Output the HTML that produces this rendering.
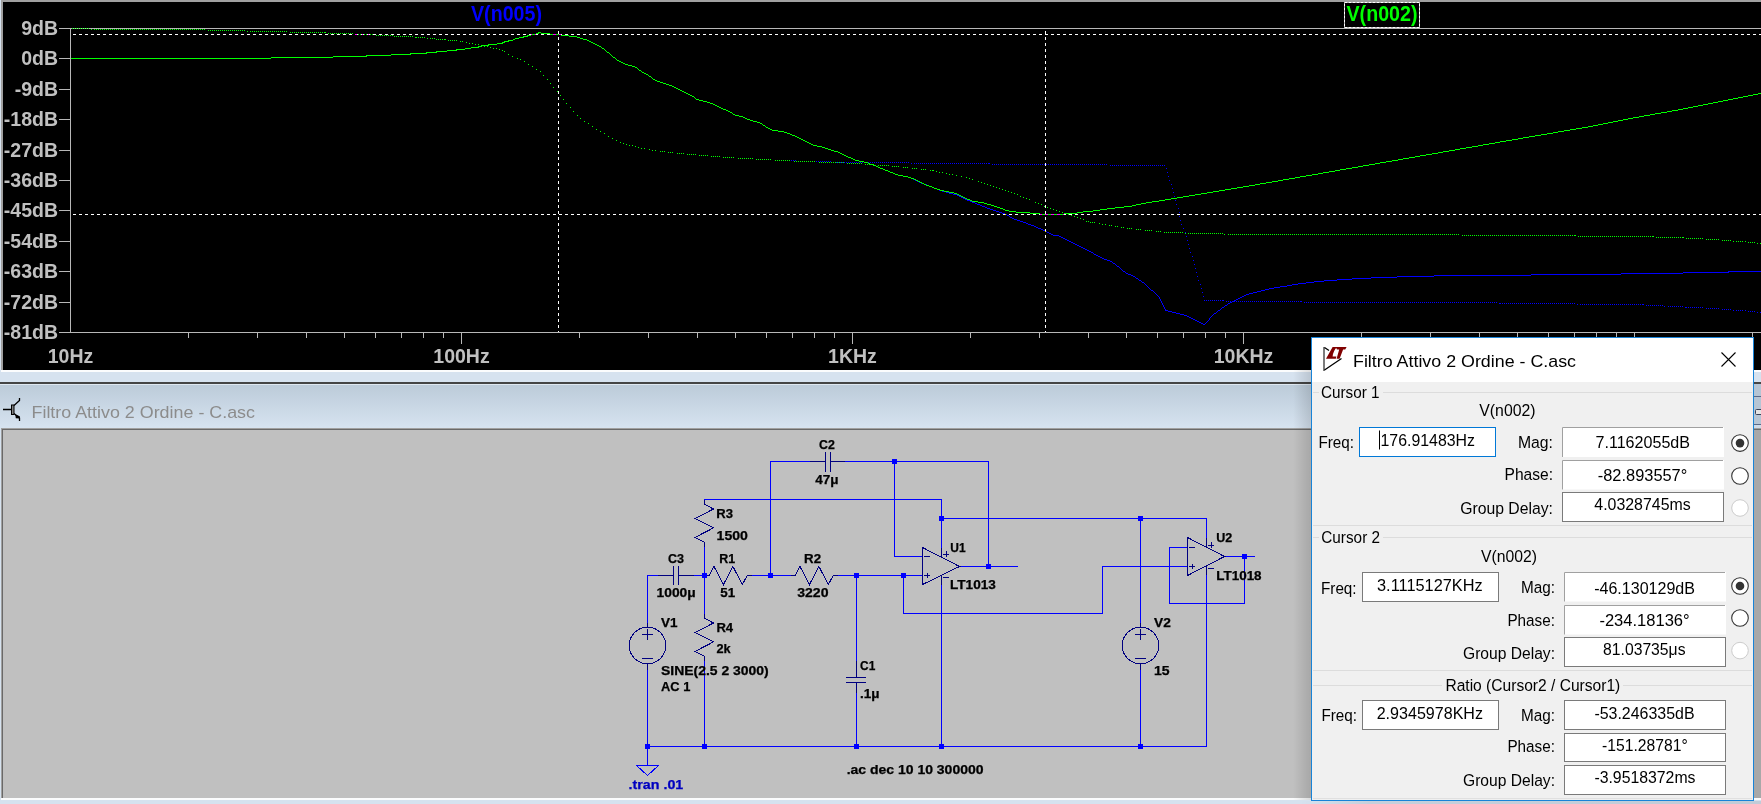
<!DOCTYPE html>
<html><head><meta charset="utf-8"><style>
html,body{margin:0;padding:0;width:1761px;height:804px;overflow:hidden;background:#d6e2ef;font-family:"Liberation Sans",sans-serif}
</style></head><body>
<svg width="1761" height="804" viewBox="0 0 1761 804" style="position:absolute;left:0;top:0"><defs><linearGradient id="tb" x1="0" y1="0" x2="0" y2="1"><stop offset="0" stop-color="#bccbd9"/><stop offset="1" stop-color="#d6e3f0"/></linearGradient></defs><rect x="0" y="0" width="1761" height="804" fill="#d6e2ef"/><rect x="1" y="0" width="1760" height="370" fill="#a0a0a0"/><rect x="3" y="2" width="1758" height="368" fill="#000"/><rect x="1" y="370" width="1760" height="2" fill="#fbfcfd"/><path d="M70.5 28 V332.5 M70 28.5 H1761 M70 332.5 H1761" stroke="#b8b8b8" stroke-width="1" fill="none"/><path d="M59 28.5 H70 M59 58.5 H70 M59 89.5 H70 M59 119.5 H70 M59 150.5 H70 M59 180.5 H70 M59 210.5 H70 M59 241.5 H70 M59 271.5 H70 M59 302.5 H70 M59 332.5 H70 M188.5 333 V338 M257.5 333 V338 M306.5 333 V338 M344.5 333 V338 M375.5 333 V338 M401.5 333 V338 M423.5 333 V338 M443.5 333 V338 M461.5 333 V344 M579.5 333 V338 M648.5 333 V338 M697.5 333 V338 M735.5 333 V338 M766.5 333 V338 M792.5 333 V338 M814.5 333 V338 M834.5 333 V338 M852.5 333 V344 M970.5 333 V338 M1039.5 333 V338 M1088.5 333 V338 M1126.5 333 V338 M1157.5 333 V338 M1183.5 333 V338 M1205.5 333 V338 M1225.5 333 V338 M1243.5 333 V344 M1361.5 333 V338 M1430.5 333 V338 M1479.5 333 V338 M1517.5 333 V338 M1548.5 333 V338 M1574.5 333 V338 M1596.5 333 V338 M1616.5 333 V338 M1634.5 333 V344 M1752.5 333 V338" stroke="#b8b8b8" stroke-width="1" fill="none"/><text x="58" y="35" text-anchor="end" font-family="Liberation Sans" font-weight="bold" font-size="19.5" fill="#c0c0c0">9dB</text><text x="58" y="65" text-anchor="end" font-family="Liberation Sans" font-weight="bold" font-size="19.5" fill="#c0c0c0">0dB</text><text x="58" y="96" text-anchor="end" font-family="Liberation Sans" font-weight="bold" font-size="19.5" fill="#c0c0c0">-9dB</text><text x="58" y="126" text-anchor="end" font-family="Liberation Sans" font-weight="bold" font-size="19.5" fill="#c0c0c0">-18dB</text><text x="58" y="157" text-anchor="end" font-family="Liberation Sans" font-weight="bold" font-size="19.5" fill="#c0c0c0">-27dB</text><text x="58" y="187" text-anchor="end" font-family="Liberation Sans" font-weight="bold" font-size="19.5" fill="#c0c0c0">-36dB</text><text x="58" y="217" text-anchor="end" font-family="Liberation Sans" font-weight="bold" font-size="19.5" fill="#c0c0c0">-45dB</text><text x="58" y="248" text-anchor="end" font-family="Liberation Sans" font-weight="bold" font-size="19.5" fill="#c0c0c0">-54dB</text><text x="58" y="278" text-anchor="end" font-family="Liberation Sans" font-weight="bold" font-size="19.5" fill="#c0c0c0">-63dB</text><text x="58" y="309" text-anchor="end" font-family="Liberation Sans" font-weight="bold" font-size="19.5" fill="#c0c0c0">-72dB</text><text x="58" y="339" text-anchor="end" font-family="Liberation Sans" font-weight="bold" font-size="19.5" fill="#c0c0c0">-81dB</text><text x="70.5" y="363" text-anchor="middle" font-family="Liberation Sans" font-weight="bold" font-size="19.5" fill="#c0c0c0">10Hz</text><text x="461.5" y="363" text-anchor="middle" font-family="Liberation Sans" font-weight="bold" font-size="19.5" fill="#c0c0c0">100Hz</text><text x="852.5" y="363" text-anchor="middle" font-family="Liberation Sans" font-weight="bold" font-size="19.5" fill="#c0c0c0">1KHz</text><text x="1243.5" y="363" text-anchor="middle" font-family="Liberation Sans" font-weight="bold" font-size="19.5" fill="#c0c0c0">10KHz</text><path d="M72 28h1v1h-1zM74 28h1v1h-1zM76 28h1v1h-1zM78 28h1v1h-1zM80 28h1v1h-1zM82 28h1v1h-1zM84 28h1v1h-1zM86 28h1v1h-1zM88 28h1v1h-1zM91 29h1v1h-1zM94 29h1v1h-1zM96 29h1v1h-1zM98 29h1v1h-1zM100 29h1v1h-1zM102 29h1v1h-1zM104 29h1v1h-1zM106 29h1v1h-1zM108 29h1v1h-1zM110 29h1v1h-1zM112 29h1v1h-1zM114 29h1v1h-1zM116 29h1v1h-1zM118 29h1v1h-1zM120 29h1v1h-1zM122 29h1v1h-1zM124 29h1v1h-1zM126 29h1v1h-1zM128 29h1v1h-1zM130 29h1v1h-1zM132 29h1v1h-1zM134 29h1v1h-1zM136 29h1v1h-1zM138 29h1v1h-1zM140 29h1v1h-1zM142 29h1v1h-1zM144 29h1v1h-1zM146 29h1v1h-1zM148 29h1v1h-1zM150 29h1v1h-1zM152 29h1v1h-1zM154 29h1v1h-1zM156 29h1v1h-1zM158 29h1v1h-1zM160 29h1v1h-1zM162 29h1v1h-1zM164 29h1v1h-1zM166 29h1v1h-1zM168 29h1v1h-1zM170 29h1v1h-1zM172 29h1v1h-1zM174 29h1v1h-1zM176 29h1v1h-1zM178 29h1v1h-1zM180 29h1v1h-1zM182 29h1v1h-1zM184 29h1v1h-1zM186 29h1v1h-1zM188 29h1v1h-1zM190 29h1v1h-1zM192 29h1v1h-1zM194 29h1v1h-1zM196 29h1v1h-1zM198 29h1v1h-1zM200 29h1v1h-1zM202 29h1v1h-1zM204 29h1v1h-1zM208 30h1v1h-1zM210 30h1v1h-1zM212 30h1v1h-1zM214 30h1v1h-1zM216 30h1v1h-1zM218 30h1v1h-1zM220 30h1v1h-1zM222 30h1v1h-1zM224 30h1v1h-1zM226 30h1v1h-1zM228 30h1v1h-1zM230 30h1v1h-1zM232 30h1v1h-1zM234 30h1v1h-1zM236 30h1v1h-1zM238 30h1v1h-1zM240 30h1v1h-1zM242 30h1v1h-1zM244 30h1v1h-1zM247 31h1v1h-1zM250 31h1v1h-1zM252 31h1v1h-1zM254 31h1v1h-1zM256 31h1v1h-1zM258 31h1v1h-1zM260 31h1v1h-1zM262 31h1v1h-1zM264 31h1v1h-1zM266 31h1v1h-1zM268 31h1v1h-1zM270 31h1v1h-1zM272 31h1v1h-1zM274 31h1v1h-1zM276 31h1v1h-1zM278 31h1v1h-1zM280 31h1v1h-1zM282 31h1v1h-1zM284 31h1v1h-1zM286 31h1v1h-1zM290 32h1v1h-1zM292 32h1v1h-1zM294 32h1v1h-1zM296 32h1v1h-1zM298 32h1v1h-1zM300 32h1v1h-1zM302 32h1v1h-1zM304 32h1v1h-1zM306 32h1v1h-1zM308 32h1v1h-1zM310 32h1v1h-1zM312 32h1v1h-1zM314 32h1v1h-1zM316 32h1v1h-1zM318 32h1v1h-1zM320 32h1v1h-1zM322 32h1v1h-1zM324 32h2v1h-2zM328 33h1v1h-1zM330 33h1v1h-1zM332 33h1v1h-1zM334 33h1v1h-1zM336 33h1v1h-1zM338 33h1v1h-1zM340 33h1v1h-1zM342 33h1v1h-1zM344 33h1v1h-1zM346 33h1v1h-1zM348 33h1v1h-1zM350 33h1v1h-1zM352 33h1v1h-1zM355 34h2v1h-2zM358 34h1v1h-1zM360 34h1v1h-1zM362 34h1v1h-1zM364 34h1v1h-1zM366 34h1v1h-1zM368 34h1v1h-1zM370 34h1v1h-1zM372 34h1v1h-1zM376 35h1v1h-1zM378 35h1v1h-1zM380 35h1v1h-1zM382 35h1v1h-1zM384 35h1v1h-1zM386 35h1v1h-1zM388 35h1v1h-1zM390 35h1v1h-1zM392 35h1v1h-1zM394 36h1v1h-1zM396 36h1v1h-1zM398 36h1v1h-1zM400 36h1v1h-1zM402 36h1v1h-1zM404 36h1v1h-1zM406 36h1v1h-1zM408 36h1v1h-1zM410 36h1v1h-1zM412 36h1v1h-1zM415 37h2v1h-2zM418 37h1v1h-1zM420 37h1v1h-1zM422 37h1v1h-1zM424 37h1v1h-1zM427 38h1v1h-1zM430 38h1v1h-1zM432 38h1v1h-1zM434 38h1v1h-1zM436 39h1v1h-1zM438 39h1v1h-1zM440 39h1v1h-1zM442 39h1v1h-1zM444 39h2v1h-2zM448 40h1v1h-1zM450 40h1v1h-1zM452 40h1v1h-1zM454 40h1v1h-1zM456 40h1v1h-1zM460 41h1v1h-1zM462 41h1v1h-1zM466 42h1v1h-1zM469 43h1v1h-1zM472 43h1v1h-1zM475 44h1v1h-1zM478 44h1v1h-1zM481 45h1v1h-1zM484 46h1v1h-1zM487 46h1v1h-1zM490 47h1v1h-1zM493 48h1v1h-1zM496 48h1v1h-1zM499 49h1v1h-1zM502 50h1v1h-1zM504 51h1v1h-1zM508 54h1v1h-1zM512 56h1v1h-1zM517 58h1v1h-1zM520 59h1v1h-1zM524 61h1v1h-1zM528 64h1v1h-1zM532 66h1v1h-1zM536 69h1v1h-1zM540 71h1v1h-1zM543 75h1v1h-1zM547 79h1v1h-1zM550 83h1v1h-1zM553 87h1v1h-1zM557 91h1v1h-1zM560 95h1v1h-1zM563 99h1v1h-1zM566 103h1v1h-1zM570 107h1v1h-1zM573 111h1v1h-1zM577 115h1v1h-1zM580 118h1v1h-1zM584 121h1v1h-1zM588 123h1v1h-1zM592 126h1v1h-1zM596 129h1v1h-1zM600 131h1v1h-1zM604 133h1v1h-1zM608 136h1v1h-1zM612 138h1v1h-1zM616 140h1v1h-1zM620 142h1v1h-1zM623 143h1v1h-1zM626 144h1v1h-1zM629 145h1v1h-1zM632 145h1v1h-1zM635 146h1v1h-1zM638 147h1v1h-1zM641 148h1v1h-1zM644 148h1v1h-1zM649 149h1v1h-1zM652 150h1v1h-1zM655 150h1v1h-1zM660 151h1v1h-1zM662 151h1v1h-1zM664 151h1v1h-1zM668 152h1v1h-1zM670 152h1v1h-1zM672 152h1v1h-1zM677 153h1v1h-1zM679 153h1v1h-1zM681 153h1v1h-1zM683 153h1v1h-1zM687 154h1v1h-1zM689 154h1v1h-1zM691 154h1v1h-1zM693 154h1v1h-1zM695 154h1v1h-1zM699 155h1v1h-1zM701 155h1v1h-1zM703 155h1v1h-1zM705 155h1v1h-1zM707 155h1v1h-1zM711 156h1v1h-1zM713 156h1v1h-1zM715 156h1v1h-1zM717 156h1v1h-1zM719 156h1v1h-1zM723 157h1v1h-1zM725 157h1v1h-1zM727 157h1v1h-1zM729 157h1v1h-1zM731 157h1v1h-1zM733 157h1v1h-1zM738 158h1v1h-1zM740 158h1v1h-1zM742 158h1v1h-1zM744 158h1v1h-1zM746 158h1v1h-1zM748 158h1v1h-1zM750 158h1v1h-1zM752 158h1v1h-1zM756 159h1v1h-1zM758 159h1v1h-1zM760 159h1v1h-1zM762 159h1v1h-1zM764 159h1v1h-1zM766 159h1v1h-1zM768 159h1v1h-1zM770 159h1v1h-1zM775 160h1v1h-1zM777 160h1v1h-1zM779 160h1v1h-1zM781 160h1v1h-1zM783 160h1v1h-1zM785 160h1v1h-1zM787 160h1v1h-1zM789 160h1v1h-1zM791 160h1v1h-1zM793 160h1v1h-1zM795 160h1v1h-1zM800 161h1v1h-1zM802 161h1v1h-1zM804 161h1v1h-1zM806 161h1v1h-1zM808 161h1v1h-1zM810 161h1v1h-1zM812 161h1v1h-1zM814 161h1v1h-1zM816 161h1v1h-1zM818 161h1v1h-1zM820 161h1v1h-1zM822 161h1v1h-1zM824 161h1v1h-1zM826 161h1v1h-1zM828 161h1v1h-1zM830 161h1v1h-1zM833 162h1v1h-1zM836 162h1v1h-1zM838 162h1v1h-1zM840 162h1v1h-1zM842 162h1v1h-1zM844 162h1v1h-1zM846 162h1v1h-1zM848 162h1v1h-1zM850 162h1v1h-1zM852 162h1v1h-1zM854 162h1v1h-1zM856 162h1v1h-1zM858 162h1v1h-1zM860 162h1v1h-1zM862 162h1v1h-1zM864 162h1v1h-1zM866 162h1v1h-1zM868 162h1v1h-1zM870 162h1v1h-1zM872 162h1v1h-1zM874 162h1v1h-1zM876 162h1v1h-1zM878 162h1v1h-1zM880 162h1v1h-1zM882 162h1v1h-1zM884 162h1v1h-1zM886 162h1v1h-1zM888 162h1v1h-1zM890 162h1v1h-1zM892 162h1v1h-1zM894 162h1v1h-1zM896 162h1v1h-1zM898 162h1v1h-1zM900 162h1v1h-1zM902 162h1v1h-1zM904 162h1v1h-1zM906 162h1v1h-1zM908 162h1v1h-1zM911 163h1v1h-1zM914 163h1v1h-1zM916 163h1v1h-1zM918 163h1v1h-1zM920 163h1v1h-1zM922 163h1v1h-1zM924 163h1v1h-1zM926 163h1v1h-1zM928 163h1v1h-1zM930 163h1v1h-1zM932 163h1v1h-1zM934 163h1v1h-1zM936 163h1v1h-1zM938 163h1v1h-1zM940 163h1v1h-1zM942 163h1v1h-1zM944 163h1v1h-1zM946 163h1v1h-1zM948 163h1v1h-1zM950 163h1v1h-1zM952 163h1v1h-1zM954 163h1v1h-1zM956 163h1v1h-1zM958 163h1v1h-1zM960 163h1v1h-1zM962 163h1v1h-1zM964 163h1v1h-1zM966 163h1v1h-1zM968 163h1v1h-1zM970 163h1v1h-1zM972 163h1v1h-1zM974 163h1v1h-1zM976 163h1v1h-1zM978 163h1v1h-1zM980 163h1v1h-1zM982 163h1v1h-1zM984 163h1v1h-1zM986 163h1v1h-1zM988 163h2v1h-2zM992 164h1v1h-1zM994 164h1v1h-1zM996 164h1v1h-1zM998 164h1v1h-1zM1000 164h1v1h-1zM1002 164h1v1h-1zM1004 164h1v1h-1zM1006 164h1v1h-1zM1008 164h1v1h-1zM1010 164h1v1h-1zM1012 164h1v1h-1zM1014 164h1v1h-1zM1016 164h1v1h-1zM1018 164h1v1h-1zM1020 164h1v1h-1zM1022 164h1v1h-1zM1024 164h1v1h-1zM1026 164h1v1h-1zM1028 164h1v1h-1zM1030 164h1v1h-1zM1032 164h1v1h-1zM1034 164h1v1h-1zM1036 164h1v1h-1zM1038 164h1v1h-1zM1040 164h1v1h-1zM1042 164h1v1h-1zM1044 164h1v1h-1zM1046 164h1v1h-1zM1048 164h1v1h-1zM1050 164h1v1h-1zM1052 164h1v1h-1zM1054 164h1v1h-1zM1056 164h1v1h-1zM1058 164h1v1h-1zM1060 164h1v1h-1zM1062 164h1v1h-1zM1064 164h1v1h-1zM1066 164h1v1h-1zM1068 164h1v1h-1zM1070 164h1v1h-1zM1072 164h1v1h-1zM1074 164h1v1h-1zM1076 164h1v1h-1zM1078 164h1v1h-1zM1080 164h1v1h-1zM1082 164h1v1h-1zM1084 164h1v1h-1zM1086 164h1v1h-1zM1088 164h1v1h-1zM1090 164h1v1h-1zM1092 164h1v1h-1zM1094 164h1v1h-1zM1096 164h1v1h-1zM1098 164h1v1h-1zM1100 164h1v1h-1zM1102 164h1v1h-1zM1104 164h1v1h-1zM1106 164h1v1h-1zM1110 165h1v1h-1zM1112 165h1v1h-1zM1114 165h1v1h-1zM1116 165h1v1h-1zM1118 165h1v1h-1zM1120 165h1v1h-1zM1122 165h1v1h-1zM1124 165h1v1h-1zM1126 165h1v1h-1zM1128 165h1v1h-1zM1130 165h1v1h-1zM1132 165h1v1h-1zM1134 165h1v1h-1zM1136 165h1v1h-1zM1138 165h1v1h-1zM1140 165h1v1h-1zM1142 165h1v1h-1zM1144 165h1v1h-1zM1146 165h1v1h-1zM1148 165h1v1h-1zM1150 165h1v1h-1zM1152 165h1v1h-1zM1154 165h1v1h-1zM1156 165h1v1h-1zM1158 165h1v1h-1zM1160 165h1v1h-1zM1162 165h1v1h-1zM1164 165h1v1h-1zM1166 168h1v1h-1zM1167 172h1v1h-1zM1168 176h1v1h-1zM1169 180h1v1h-1zM1171 184h1v1h-1zM1172 188h1v1h-1zM1173 192h1v1h-1zM1174 196h1v1h-1zM1175 200h1v1h-1zM1176 204h1v1h-1zM1178 208h1v1h-1zM1179 212h1v1h-1zM1179 216h1v1h-1zM1180 220h1v1h-1zM1181 224h1v1h-1zM1183 228h1v1h-1zM1185 232h1v1h-1zM1186 236h1v1h-1zM1187 240h1v1h-1zM1188 244h1v1h-1zM1189 248h1v1h-1zM1190 252h1v1h-1zM1192 256h1v1h-1zM1193 260h1v1h-1zM1194 264h1v1h-1zM1195 268h1v1h-1zM1196 272h1v1h-1zM1197 276h1v1h-1zM1198 280h1v1h-1zM1200 284h1v1h-1zM1201 288h1v1h-1zM1202 292h1v1h-1zM1203 296h1v1h-1zM1204 300h1v1h-1zM1206 300h1v1h-1zM1208 300h1v1h-1zM1210 300h1v1h-1zM1212 300h1v1h-1zM1214 300h1v1h-1zM1216 300h1v1h-1zM1218 300h1v1h-1zM1220 300h1v1h-1zM1222 300h2v1h-2zM1226 301h1v1h-1zM1228 301h1v1h-1zM1230 301h1v1h-1zM1232 301h1v1h-1zM1234 301h1v1h-1zM1236 301h1v1h-1zM1238 301h1v1h-1zM1240 301h1v1h-1zM1242 301h1v1h-1zM1244 301h1v1h-1zM1246 301h1v1h-1zM1248 301h1v1h-1zM1250 301h1v1h-1zM1252 301h1v1h-1zM1254 301h1v1h-1zM1256 301h1v1h-1zM1258 301h1v1h-1zM1260 301h1v1h-1zM1262 301h1v1h-1zM1264 301h1v1h-1zM1266 301h1v1h-1zM1268 301h1v1h-1zM1270 301h1v1h-1zM1272 301h1v1h-1zM1274 301h1v1h-1zM1276 301h1v1h-1zM1278 301h1v1h-1zM1280 301h1v1h-1zM1282 301h1v1h-1zM1284 301h1v1h-1zM1286 301h1v1h-1zM1288 301h1v1h-1zM1290 301h1v1h-1zM1292 301h1v1h-1zM1294 301h1v1h-1zM1296 301h1v1h-1zM1298 301h1v1h-1zM1300 301h2v1h-2zM1304 302h1v1h-1zM1306 302h1v1h-1zM1308 302h1v1h-1zM1310 302h1v1h-1zM1312 302h1v1h-1zM1314 302h1v1h-1zM1316 302h1v1h-1zM1318 302h1v1h-1zM1320 302h1v1h-1zM1322 302h1v1h-1zM1324 302h1v1h-1zM1326 302h1v1h-1zM1328 302h1v1h-1zM1330 302h1v1h-1zM1332 302h1v1h-1zM1334 302h1v1h-1zM1336 302h1v1h-1zM1338 302h1v1h-1zM1340 302h1v1h-1zM1342 302h1v1h-1zM1344 302h1v1h-1zM1346 302h1v1h-1zM1348 302h1v1h-1zM1350 302h1v1h-1zM1352 302h1v1h-1zM1354 302h1v1h-1zM1356 302h1v1h-1zM1358 302h1v1h-1zM1360 302h1v1h-1zM1362 302h1v1h-1zM1364 302h1v1h-1zM1366 302h1v1h-1zM1368 302h1v1h-1zM1370 302h1v1h-1zM1372 302h1v1h-1zM1374 302h1v1h-1zM1376 302h1v1h-1zM1378 302h1v1h-1zM1380 302h1v1h-1zM1382 302h1v1h-1zM1384 302h1v1h-1zM1386 302h1v1h-1zM1388 302h1v1h-1zM1390 302h1v1h-1zM1392 302h1v1h-1zM1394 302h1v1h-1zM1396 302h1v1h-1zM1398 302h1v1h-1zM1400 302h1v1h-1zM1402 302h1v1h-1zM1404 302h1v1h-1zM1406 302h1v1h-1zM1408 302h1v1h-1zM1410 302h1v1h-1zM1412 302h1v1h-1zM1414 302h1v1h-1zM1416 302h1v1h-1zM1418 302h1v1h-1zM1420 302h1v1h-1zM1422 302h1v1h-1zM1424 302h1v1h-1zM1426 302h1v1h-1zM1428 302h1v1h-1zM1430 302h1v1h-1zM1432 302h1v1h-1zM1434 302h1v1h-1zM1436 302h1v1h-1zM1438 302h1v1h-1zM1440 302h1v1h-1zM1442 302h1v1h-1zM1444 302h1v1h-1zM1446 302h1v1h-1zM1448 302h1v1h-1zM1450 302h1v1h-1zM1452 302h1v1h-1zM1454 302h1v1h-1zM1456 302h1v1h-1zM1458 302h1v1h-1zM1460 302h1v1h-1zM1462 302h1v1h-1zM1464 302h1v1h-1zM1466 302h1v1h-1zM1468 302h1v1h-1zM1470 302h1v1h-1zM1472 302h1v1h-1zM1474 302h1v1h-1zM1476 302h1v1h-1zM1478 302h1v1h-1zM1480 302h1v1h-1zM1482 302h1v1h-1zM1484 302h1v1h-1zM1486 302h1v1h-1zM1488 302h1v1h-1zM1490 302h1v1h-1zM1492 302h1v1h-1zM1494 302h1v1h-1zM1496 302h1v1h-1zM1499 303h2v1h-2zM1502 303h1v1h-1zM1504 303h1v1h-1zM1506 303h1v1h-1zM1508 303h1v1h-1zM1510 303h1v1h-1zM1512 303h1v1h-1zM1514 303h1v1h-1zM1516 303h1v1h-1zM1518 303h1v1h-1zM1520 303h1v1h-1zM1522 303h1v1h-1zM1524 303h1v1h-1zM1526 303h1v1h-1zM1528 303h1v1h-1zM1530 303h1v1h-1zM1532 303h1v1h-1zM1534 303h1v1h-1zM1536 303h1v1h-1zM1538 303h1v1h-1zM1540 303h1v1h-1zM1542 303h1v1h-1zM1544 303h1v1h-1zM1546 303h1v1h-1zM1548 303h1v1h-1zM1550 303h1v1h-1zM1552 303h1v1h-1zM1554 303h1v1h-1zM1556 303h1v1h-1zM1558 303h1v1h-1zM1560 303h1v1h-1zM1562 303h1v1h-1zM1564 303h1v1h-1zM1566 303h1v1h-1zM1568 303h1v1h-1zM1570 303h1v1h-1zM1572 303h1v1h-1zM1574 303h1v1h-1zM1577 304h1v1h-1zM1580 304h1v1h-1zM1582 304h1v1h-1zM1584 304h1v1h-1zM1586 304h1v1h-1zM1588 304h1v1h-1zM1590 304h1v1h-1zM1592 304h1v1h-1zM1594 304h1v1h-1zM1596 304h1v1h-1zM1598 304h1v1h-1zM1600 304h1v1h-1zM1602 304h1v1h-1zM1604 304h1v1h-1zM1606 304h1v1h-1zM1608 304h1v1h-1zM1610 304h1v1h-1zM1612 304h1v1h-1zM1614 304h1v1h-1zM1616 304h1v1h-1zM1618 304h1v1h-1zM1620 304h1v1h-1zM1622 304h1v1h-1zM1624 304h1v1h-1zM1626 304h1v1h-1zM1628 304h1v1h-1zM1630 304h1v1h-1zM1632 304h1v1h-1zM1634 304h1v1h-1zM1636 304h1v1h-1zM1638 304h1v1h-1zM1640 304h1v1h-1zM1642 304h2v1h-2zM1646 305h1v1h-1zM1648 305h1v1h-1zM1650 305h1v1h-1zM1652 305h1v1h-1zM1654 305h1v1h-1zM1656 305h1v1h-1zM1658 305h1v1h-1zM1660 305h1v1h-1zM1662 305h1v1h-1zM1664 306h1v1h-1zM1668 306h1v1h-1zM1670 306h1v1h-1zM1672 306h1v1h-1zM1674 306h1v1h-1zM1676 306h1v1h-1zM1678 306h1v1h-1zM1680 306h1v1h-1zM1682 306h1v1h-1zM1685 307h2v1h-2zM1688 307h1v1h-1zM1690 307h1v1h-1zM1692 307h1v1h-1zM1694 307h1v1h-1zM1696 307h1v1h-1zM1698 307h1v1h-1zM1700 307h1v1h-1zM1702 307h1v1h-1zM1706 308h1v1h-1zM1708 308h1v1h-1zM1710 308h1v1h-1zM1712 308h1v1h-1zM1714 308h1v1h-1zM1716 308h1v1h-1zM1718 308h1v1h-1zM1722 309h1v1h-1zM1724 309h1v1h-1zM1726 309h1v1h-1zM1728 309h1v1h-1zM1730 309h1v1h-1zM1733 310h1v1h-1zM1736 310h1v1h-1zM1738 310h1v1h-1zM1740 310h1v1h-1zM1742 310h1v1h-1zM1745 310h1v1h-1zM1748 311h1v1h-1zM1750 311h1v1h-1zM1752 311h1v1h-1zM1754 311h1v1h-1zM1757 312h1v1h-1zM1760 312h1v1h-1z" fill="#0000ff" shape-rendering="crispEdges"/><path d="M538 32h3v1h-3zM536 33h3v1h-3zM541 33h9v1h-9zM531 34h5v1h-5zM550 34h11v1h-11zM527 35h4v1h-4zM561 35h8v1h-8zM523 36h5v1h-5zM569 36h8v1h-8zM519 37h5v1h-5zM577 37h3v1h-3zM515 38h4v1h-4zM580 38h3v1h-3zM513 39h2v1h-2zM583 39h4v1h-4zM508 40h5v1h-5zM587 40h2v1h-2zM504 41h5v1h-5zM589 41h2v1h-2zM502 42h3v1h-3zM591 42h2v1h-2zM497 43h6v1h-6zM593 43h2v1h-2zM488 44h9v1h-9zM595 44h2v1h-2zM482 45h7v1h-7zM597 45h2v1h-2zM478 46h4v1h-4zM599 46h2v1h-2zM471 47h8v1h-8zM601 47h1v1h-1zM465 48h6v1h-6zM602 48h2v1h-2zM456 49h9v1h-9zM604 49h1v1h-1zM447 50h10v1h-10zM605 50h1v1h-1zM436 51h11v1h-11zM606 51h1v1h-1zM426 52h11v1h-11zM607 52h2v1h-2zM410 53h17v1h-17zM609 53h1v1h-1zM391 54h20v1h-20zM610 54h1v1h-1zM366 55h25v1h-25zM611 55h1v1h-1zM333 56h34v1h-34zM612 56h1v1h-1zM271 57h62v1h-62zM613 57h2v1h-2zM71 58h200v1h-200zM615 58h1v1h-1zM616 59h1v1h-1zM617 60h2v1h-2zM619 61h2v1h-2zM621 62h2v1h-2zM623 63h2v1h-2zM625 64h3v1h-3zM628 65h4v1h-4zM632 66h3v1h-3zM635 67h2v1h-2zM637 68h1v1h-1zM638 69h1v1h-1zM639 70h2v1h-2zM641 71h1v1h-1zM642 72h2v1h-2zM644 73h2v1h-2zM646 74h2v1h-2zM648 75h1v1h-1zM649 76h2v1h-2zM651 77h1v1h-1zM652 78h1v1h-1zM653 79h2v1h-2zM655 80h2v1h-2zM657 81h3v1h-3zM660 82h3v1h-3zM663 83h3v1h-3zM666 84h3v1h-3zM669 85h3v1h-3zM672 86h2v1h-2zM674 87h2v1h-2zM676 88h2v1h-2zM678 89h2v1h-2zM680 90h2v1h-2zM682 91h2v1h-2zM684 92h2v1h-2zM686 93h2v1h-2zM688 94h2v1h-2zM690 95h2v1h-2zM692 96h2v1h-2zM694 97h1v1h-1zM695 98h1v1h-1zM696 99h3v1h-3zM699 100h4v1h-4zM703 101h4v1h-4zM707 102h3v1h-3zM710 103h3v1h-3zM713 104h2v1h-2zM715 105h2v1h-2zM717 106h2v1h-2zM719 107h2v1h-2zM721 108h2v1h-2zM723 109h3v1h-3zM726 110h2v1h-2zM728 111h2v1h-2zM730 112h2v1h-2zM732 113h1v1h-1zM733 114h2v1h-2zM735 115h4v1h-4zM739 116h4v1h-4zM743 117h2v1h-2zM745 118h2v1h-2zM747 119h3v1h-3zM750 120h3v1h-3zM753 121h4v1h-4zM757 122h3v1h-3zM760 123h2v1h-2zM762 124h1v1h-1zM763 125h2v1h-2zM765 126h1v1h-1zM766 127h2v1h-2zM768 128h2v1h-2zM770 129h2v1h-2zM772 130h6v1h-6zM778 131h6v1h-6zM784 132h3v1h-3zM787 133h3v1h-3zM790 134h2v1h-2zM792 135h3v1h-3zM795 136h2v1h-2zM797 137h2v1h-2zM799 138h2v1h-2zM801 139h2v1h-2zM803 140h2v1h-2zM805 141h2v1h-2zM807 142h2v1h-2zM809 143h2v1h-2zM811 144h2v1h-2zM813 145h4v1h-4zM817 146h5v1h-5zM822 147h3v1h-3zM825 148h3v1h-3zM828 149h3v1h-3zM831 150h3v1h-3zM834 151h4v1h-4zM838 152h2v1h-2zM840 153h2v1h-2zM842 154h2v1h-2zM844 155h2v1h-2zM846 156h2v1h-2zM848 157h3v1h-3zM851 158h2v1h-2zM853 159h2v1h-2zM855 160h4v1h-4zM859 161h5v1h-5zM864 162h4v1h-4zM868 163h2v1h-2zM870 164h3v1h-3zM873 165h3v1h-3zM876 166h2v1h-2zM878 167h2v1h-2zM880 168h3v1h-3zM883 169h2v1h-2zM885 170h3v1h-3zM888 171h2v1h-2zM890 172h3v1h-3zM893 173h2v1h-2zM895 174h3v1h-3zM898 175h5v1h-5zM903 176h5v1h-5zM908 177h3v1h-3zM911 178h2v1h-2zM913 179h2v1h-2zM915 180h2v1h-2zM917 181h2v1h-2zM919 182h2v1h-2zM921 183h3v1h-3zM924 184h3v1h-3zM927 185h2v1h-2zM929 186h3v1h-3zM932 187h2v1h-2zM934 188h3v1h-3zM937 189h2v1h-2zM939 190h3v1h-3zM942 191h4v1h-4zM946 192h3v1h-3zM949 193h4v1h-4zM953 194h4v1h-4zM957 195h2v1h-2zM959 196h2v1h-2zM961 197h2v1h-2zM963 198h2v1h-2zM965 199h2v1h-2zM967 200h3v1h-3zM970 201h2v1h-2zM972 202h3v1h-3zM975 203h2v1h-2zM977 204h3v1h-3zM980 205h2v1h-2zM982 206h3v1h-3zM985 207h2v1h-2zM987 208h3v1h-3zM990 209h3v1h-3zM993 210h3v1h-3zM996 211h3v1h-3zM999 212h3v1h-3zM1002 213h3v1h-3zM1005 214h2v1h-2zM1007 215h2v1h-2zM1009 216h1v1h-1zM1010 217h2v1h-2zM1012 218h2v1h-2zM1014 219h3v1h-3zM1017 220h3v1h-3zM1020 221h3v1h-3zM1023 222h3v1h-3zM1026 223h2v1h-2zM1028 224h3v1h-3zM1031 225h3v1h-3zM1034 226h2v1h-2zM1036 227h2v1h-2zM1038 228h3v1h-3zM1041 229h2v1h-2zM1043 230h2v1h-2zM1045 231h2v1h-2zM1047 232h2v1h-2zM1049 233h2v1h-2zM1051 234h2v1h-2zM1053 235h6v1h-6zM1059 236h2v1h-2zM1061 237h2v1h-2zM1063 238h2v1h-2zM1065 239h2v1h-2zM1067 240h2v1h-2zM1069 241h2v1h-2zM1071 242h2v1h-2zM1073 243h2v1h-2zM1075 244h2v1h-2zM1077 245h2v1h-2zM1079 246h2v1h-2zM1081 247h2v1h-2zM1083 248h2v1h-2zM1085 249h2v1h-2zM1087 250h2v1h-2zM1089 251h2v1h-2zM1091 252h2v1h-2zM1093 253h1v1h-1zM1094 254h2v1h-2zM1096 255h2v1h-2zM1098 256h2v1h-2zM1100 257h2v1h-2zM1102 258h2v1h-2zM1104 259h3v1h-3zM1107 260h3v1h-3zM1110 261h2v1h-2zM1112 262h1v1h-1zM1113 263h2v1h-2zM1115 264h1v1h-1zM1116 265h1v1h-1zM1117 266h2v1h-2zM1119 267h1v1h-1zM1120 268h1v1h-1zM1121 269h1v1h-1zM1122 270h1v1h-1zM1123 271h2v1h-2zM1728 271h33v1h-33zM1125 272h1v1h-1zM1683 272h46v1h-46zM1126 273h2v1h-2zM1621 273h62v1h-62zM1128 274h3v1h-3zM1531 274h90v1h-90zM1131 275h2v1h-2zM1434 275h97v1h-97zM1133 276h2v1h-2zM1397 276h37v1h-37zM1135 277h1v1h-1zM1371 277h26v1h-26zM1136 278h2v1h-2zM1352 278h19v1h-19zM1138 279h1v1h-1zM1337 279h15v1h-15zM1139 280h2v1h-2zM1324 280h13v1h-13zM1141 281h1v1h-1zM1314 281h10v1h-10zM1142 282h2v1h-2zM1306 282h8v1h-8zM1144 283h1v1h-1zM1298 283h8v1h-8zM1145 284h1v1h-1zM1292 284h6v1h-6zM1146 285h1v1h-1zM1287 285h5v1h-5zM1147 286h1v1h-1zM1280 286h7v1h-7zM1148 287h1v1h-1zM1274 287h6v1h-6zM1149 288h1v1h-1zM1269 288h5v1h-5zM1150 289h1v1h-1zM1265 289h4v1h-4zM1151 290h2v1h-2zM1261 290h4v1h-4zM1153 291h1v1h-1zM1257 291h4v1h-4zM1154 292h1v1h-1zM1253 292h4v1h-4zM1155 293h1v1h-1zM1249 293h4v1h-4zM1156 294h1v1h-1zM1246 294h3v1h-3zM1157 295h1v1h-1zM1244 295h2v1h-2zM1158 296h1v1h-1zM1242 296h2v1h-2zM1159 297h1v1h-1zM1240 297h2v1h-2zM1159 298h1v1h-1zM1238 298h2v1h-2zM1160 299h1v1h-1zM1236 299h2v1h-2zM1160 300h1v1h-1zM1234 300h2v1h-2zM1161 301h1v1h-1zM1232 301h2v1h-2zM1161 302h1v1h-1zM1230 302h2v1h-2zM1162 303h1v1h-1zM1228 303h2v1h-2zM1162 304h1v1h-1zM1227 304h1v1h-1zM1163 305h1v1h-1zM1225 305h2v1h-2zM1163 306h1v1h-1zM1224 306h1v1h-1zM1164 307h1v1h-1zM1222 307h2v1h-2zM1164 308h1v1h-1zM1221 308h1v1h-1zM1165 309h1v1h-1zM1220 309h1v1h-1zM1165 310h3v1h-3zM1218 310h2v1h-2zM1168 311h4v1h-4zM1217 311h1v1h-1zM1172 312h4v1h-4zM1216 312h1v1h-1zM1176 313h4v1h-4zM1214 313h2v1h-2zM1180 314h4v1h-4zM1213 314h1v1h-1zM1184 315h3v1h-3zM1212 315h1v1h-1zM1187 316h2v1h-2zM1211 316h1v1h-1zM1189 317h2v1h-2zM1210 317h1v1h-1zM1191 318h2v1h-2zM1209 318h1v1h-1zM1193 319h2v1h-2zM1209 319h1v1h-1zM1195 320h2v1h-2zM1208 320h1v1h-1zM1197 321h2v1h-2zM1207 321h1v1h-1zM1199 322h2v1h-2zM1206 322h1v1h-1zM1201 323h2v1h-2zM1205 323h1v1h-1zM1203 324h2v1h-2z" fill="#0000ff" shape-rendering="crispEdges"/><path d="M72 28h1v1h-1zM74 28h1v1h-1zM76 28h1v1h-1zM78 28h1v1h-1zM80 28h1v1h-1zM82 28h1v1h-1zM84 28h1v1h-1zM86 28h1v1h-1zM88 28h1v1h-1zM91 29h1v1h-1zM94 29h1v1h-1zM96 29h1v1h-1zM98 29h1v1h-1zM100 29h1v1h-1zM102 29h1v1h-1zM104 29h1v1h-1zM106 29h1v1h-1zM108 29h1v1h-1zM110 29h1v1h-1zM112 29h1v1h-1zM114 29h1v1h-1zM116 29h1v1h-1zM118 29h1v1h-1zM120 29h1v1h-1zM122 29h1v1h-1zM124 29h1v1h-1zM126 29h1v1h-1zM128 29h1v1h-1zM130 29h1v1h-1zM132 29h1v1h-1zM134 29h1v1h-1zM136 29h1v1h-1zM138 29h1v1h-1zM140 29h1v1h-1zM142 29h1v1h-1zM144 29h1v1h-1zM146 29h1v1h-1zM148 29h1v1h-1zM150 29h1v1h-1zM152 29h1v1h-1zM154 29h1v1h-1zM156 29h1v1h-1zM158 29h1v1h-1zM160 29h1v1h-1zM162 29h1v1h-1zM164 29h1v1h-1zM166 29h1v1h-1zM168 29h1v1h-1zM170 29h1v1h-1zM172 29h1v1h-1zM174 29h1v1h-1zM176 29h1v1h-1zM178 29h1v1h-1zM180 29h1v1h-1zM182 29h1v1h-1zM184 29h1v1h-1zM186 29h1v1h-1zM188 29h1v1h-1zM190 29h1v1h-1zM192 29h1v1h-1zM194 29h1v1h-1zM196 29h1v1h-1zM198 29h1v1h-1zM200 29h1v1h-1zM202 29h1v1h-1zM204 29h1v1h-1zM208 30h1v1h-1zM210 30h1v1h-1zM212 30h1v1h-1zM214 30h1v1h-1zM216 30h1v1h-1zM218 30h1v1h-1zM220 30h1v1h-1zM222 30h1v1h-1zM224 30h1v1h-1zM226 30h1v1h-1zM228 30h1v1h-1zM230 30h1v1h-1zM232 30h1v1h-1zM234 30h1v1h-1zM236 30h1v1h-1zM238 30h1v1h-1zM240 30h1v1h-1zM242 30h1v1h-1zM244 30h1v1h-1zM247 31h1v1h-1zM250 31h1v1h-1zM252 31h1v1h-1zM254 31h1v1h-1zM256 31h1v1h-1zM258 31h1v1h-1zM260 31h1v1h-1zM262 31h1v1h-1zM264 31h1v1h-1zM266 31h1v1h-1zM268 31h1v1h-1zM270 31h1v1h-1zM272 31h1v1h-1zM274 31h1v1h-1zM276 31h1v1h-1zM278 31h1v1h-1zM280 31h1v1h-1zM282 31h1v1h-1zM284 31h1v1h-1zM286 31h1v1h-1zM290 32h1v1h-1zM292 32h1v1h-1zM294 32h1v1h-1zM296 32h1v1h-1zM298 32h1v1h-1zM300 32h1v1h-1zM302 32h1v1h-1zM304 32h1v1h-1zM306 32h1v1h-1zM308 32h1v1h-1zM310 32h1v1h-1zM312 32h1v1h-1zM314 32h1v1h-1zM316 32h1v1h-1zM318 32h1v1h-1zM320 32h1v1h-1zM322 32h1v1h-1zM324 32h2v1h-2zM328 33h1v1h-1zM330 33h1v1h-1zM332 33h1v1h-1zM334 33h1v1h-1zM336 33h1v1h-1zM338 33h1v1h-1zM340 33h1v1h-1zM342 33h1v1h-1zM344 33h1v1h-1zM346 33h1v1h-1zM348 33h1v1h-1zM350 33h1v1h-1zM352 33h1v1h-1zM355 34h2v1h-2zM358 34h1v1h-1zM360 34h1v1h-1zM362 34h1v1h-1zM364 34h1v1h-1zM366 34h1v1h-1zM368 34h1v1h-1zM370 34h1v1h-1zM372 34h1v1h-1zM376 35h1v1h-1zM378 35h1v1h-1zM380 35h1v1h-1zM382 35h1v1h-1zM384 35h1v1h-1zM386 35h1v1h-1zM388 35h1v1h-1zM390 35h1v1h-1zM392 35h1v1h-1zM394 36h1v1h-1zM396 36h1v1h-1zM398 36h1v1h-1zM400 36h1v1h-1zM402 36h1v1h-1zM404 36h1v1h-1zM406 36h1v1h-1zM408 36h1v1h-1zM410 36h1v1h-1zM412 36h1v1h-1zM415 37h2v1h-2zM418 37h1v1h-1zM420 37h1v1h-1zM422 37h1v1h-1zM424 37h1v1h-1zM427 38h1v1h-1zM430 38h1v1h-1zM432 38h1v1h-1zM434 38h1v1h-1zM436 39h1v1h-1zM438 39h1v1h-1zM440 39h1v1h-1zM442 39h1v1h-1zM444 39h2v1h-2zM448 40h1v1h-1zM450 40h1v1h-1zM452 40h1v1h-1zM454 40h1v1h-1zM456 40h1v1h-1zM460 41h1v1h-1zM462 41h1v1h-1zM466 42h1v1h-1zM469 43h1v1h-1zM472 43h1v1h-1zM475 44h1v1h-1zM478 44h1v1h-1zM481 45h1v1h-1zM484 46h1v1h-1zM487 46h1v1h-1zM490 47h1v1h-1zM493 48h1v1h-1zM496 48h1v1h-1zM499 49h1v1h-1zM502 50h1v1h-1zM504 51h1v1h-1zM508 54h1v1h-1zM512 56h1v1h-1zM517 58h1v1h-1zM520 59h1v1h-1zM524 61h1v1h-1zM528 64h1v1h-1zM532 66h1v1h-1zM536 69h1v1h-1zM540 71h1v1h-1zM543 75h1v1h-1zM547 79h1v1h-1zM550 83h1v1h-1zM553 87h1v1h-1zM557 91h1v1h-1zM560 95h1v1h-1zM563 99h1v1h-1zM566 103h1v1h-1zM570 107h1v1h-1zM573 111h1v1h-1zM577 115h1v1h-1zM580 118h1v1h-1zM584 121h1v1h-1zM588 123h1v1h-1zM592 126h1v1h-1zM596 129h1v1h-1zM600 131h1v1h-1zM604 133h1v1h-1zM608 136h1v1h-1zM612 138h1v1h-1zM616 140h1v1h-1zM620 142h1v1h-1zM623 143h1v1h-1zM626 144h1v1h-1zM629 145h1v1h-1zM632 145h1v1h-1zM635 146h1v1h-1zM638 147h1v1h-1zM641 148h1v1h-1zM644 148h1v1h-1zM649 149h1v1h-1zM652 150h1v1h-1zM655 150h1v1h-1zM660 151h1v1h-1zM662 151h1v1h-1zM664 151h1v1h-1zM668 152h1v1h-1zM670 152h1v1h-1zM672 152h1v1h-1zM677 153h1v1h-1zM679 153h1v1h-1zM681 153h1v1h-1zM683 153h1v1h-1zM687 154h1v1h-1zM689 154h1v1h-1zM691 154h1v1h-1zM693 154h1v1h-1zM695 154h1v1h-1zM699 155h1v1h-1zM701 155h1v1h-1zM703 155h1v1h-1zM705 155h1v1h-1zM707 155h1v1h-1zM711 156h1v1h-1zM713 156h1v1h-1zM715 156h1v1h-1zM717 156h1v1h-1zM719 156h1v1h-1zM723 157h1v1h-1zM725 157h1v1h-1zM727 157h1v1h-1zM729 157h1v1h-1zM731 157h1v1h-1zM733 157h1v1h-1zM738 158h1v1h-1zM740 158h1v1h-1zM742 158h1v1h-1zM744 158h1v1h-1zM746 158h1v1h-1zM748 158h1v1h-1zM750 158h1v1h-1zM752 158h1v1h-1zM756 159h1v1h-1zM758 159h1v1h-1zM760 159h1v1h-1zM762 159h1v1h-1zM764 159h1v1h-1zM766 159h1v1h-1zM768 159h1v1h-1zM770 159h1v1h-1zM775 160h1v1h-1zM777 160h1v1h-1zM779 160h1v1h-1zM781 160h1v1h-1zM783 160h1v1h-1zM785 160h1v1h-1zM787 160h1v1h-1zM789 160h1v1h-1zM794 161h1v1h-1zM796 161h1v1h-1zM798 161h1v1h-1zM800 161h1v1h-1zM802 161h1v1h-1zM804 161h1v1h-1zM806 161h1v1h-1zM808 161h1v1h-1zM810 161h1v1h-1zM812 161h1v1h-1zM814 161h1v1h-1zM819 162h1v1h-1zM821 162h1v1h-1zM823 162h1v1h-1zM825 162h1v1h-1zM827 162h1v1h-1zM829 162h1v1h-1zM831 162h1v1h-1zM833 162h1v1h-1zM835 162h1v1h-1zM837 162h1v1h-1zM839 162h1v1h-1zM841 162h1v1h-1zM843 162h1v1h-1zM847 163h1v1h-1zM849 163h1v1h-1zM851 163h1v1h-1zM853 163h1v1h-1zM855 163h1v1h-1zM857 163h1v1h-1zM859 163h1v1h-1zM861 163h1v1h-1zM865 164h1v1h-1zM867 164h1v1h-1zM869 164h1v1h-1zM871 164h1v1h-1zM873 164h1v1h-1zM878 165h1v1h-1zM880 165h1v1h-1zM882 165h1v1h-1zM884 165h1v1h-1zM886 165h1v1h-1zM888 165h1v1h-1zM892 166h1v1h-1zM894 166h1v1h-1zM896 166h1v1h-1zM898 166h1v1h-1zM903 167h1v1h-1zM905 167h1v1h-1zM907 167h1v1h-1zM912 168h1v1h-1zM914 168h1v1h-1zM916 168h1v1h-1zM921 169h1v1h-1zM923 169h1v1h-1zM925 169h1v1h-1zM930 170h1v1h-1zM932 170h2v1h-2zM936 171h1v1h-1zM939 172h1v1h-1zM942 172h1v1h-1zM946 173h1v1h-1zM949 174h1v1h-1zM952 174h1v1h-1zM956 175h1v1h-1zM961 176h1v1h-1zM966 177h1v1h-1zM969 178h1v1h-1zM972 179h1v1h-1zM978 181h1v1h-1zM981 182h1v1h-1zM984 183h1v1h-1zM987 184h1v1h-1zM990 185h1v1h-1zM993 186h1v1h-1zM996 187h1v1h-1zM999 188h1v1h-1zM1002 189h1v1h-1zM1005 190h1v1h-1zM1008 191h1v1h-1zM1011 192h1v1h-1zM1014 193h1v1h-1zM1017 194h1v1h-1zM1020 196h1v1h-1zM1023 197h1v1h-1zM1026 198h1v1h-1zM1029 199h1v1h-1zM1035 202h1v1h-1zM1038 203h1v1h-1zM1041 204h1v1h-1zM1044 206h1v1h-1zM1047 207h1v1h-1zM1050 208h1v1h-1zM1053 209h1v1h-1zM1056 210h1v1h-1zM1059 211h1v1h-1zM1062 212h1v1h-1zM1065 213h1v1h-1zM1068 214h1v1h-1zM1071 215h1v1h-1zM1074 216h1v1h-1zM1077 217h1v1h-1zM1080 218h1v1h-1zM1083 219h1v1h-1zM1086 221h1v1h-1zM1088 221h1v1h-1zM1090 222h1v1h-1zM1092 222h1v1h-1zM1094 222h1v1h-1zM1099 223h1v1h-1zM1102 224h1v1h-1zM1105 224h1v1h-1zM1109 225h1v1h-1zM1111 225h1v1h-1zM1115 226h1v1h-1zM1117 226h1v1h-1zM1121 227h1v1h-1zM1123 227h1v1h-1zM1127 228h1v1h-1zM1129 228h1v1h-1zM1131 228h1v1h-1zM1136 229h1v1h-1zM1138 229h1v1h-1zM1140 229h1v1h-1zM1145 230h1v1h-1zM1147 230h1v1h-1zM1149 230h1v1h-1zM1151 230h1v1h-1zM1156 231h1v1h-1zM1158 231h1v1h-1zM1160 231h1v1h-1zM1164 232h1v1h-1zM1166 232h1v1h-1zM1168 232h1v1h-1zM1170 232h1v1h-1zM1172 232h1v1h-1zM1174 232h1v1h-1zM1176 232h1v1h-1zM1178 232h1v1h-1zM1180 232h1v1h-1zM1182 232h1v1h-1zM1185 233h1v1h-1zM1188 233h1v1h-1zM1190 233h1v1h-1zM1192 233h1v1h-1zM1194 233h1v1h-1zM1196 233h1v1h-1zM1198 233h1v1h-1zM1200 233h1v1h-1zM1202 233h1v1h-1zM1204 233h1v1h-1zM1206 233h1v1h-1zM1208 233h1v1h-1zM1210 233h1v1h-1zM1212 233h1v1h-1zM1214 233h1v1h-1zM1216 233h1v1h-1zM1218 233h1v1h-1zM1220 233h1v1h-1zM1222 233h1v1h-1zM1224 234h1v1h-1zM1228 234h1v1h-1zM1230 234h1v1h-1zM1232 234h1v1h-1zM1234 234h1v1h-1zM1236 234h1v1h-1zM1238 234h1v1h-1zM1240 234h1v1h-1zM1242 234h1v1h-1zM1244 234h1v1h-1zM1246 234h1v1h-1zM1248 234h1v1h-1zM1250 234h1v1h-1zM1252 234h1v1h-1zM1254 234h1v1h-1zM1256 234h1v1h-1zM1258 234h1v1h-1zM1260 234h1v1h-1zM1262 234h1v1h-1zM1264 234h1v1h-1zM1266 234h1v1h-1zM1268 234h1v1h-1zM1270 234h1v1h-1zM1272 234h1v1h-1zM1274 234h1v1h-1zM1276 234h1v1h-1zM1278 234h1v1h-1zM1280 234h1v1h-1zM1282 234h1v1h-1zM1284 234h1v1h-1zM1286 234h1v1h-1zM1288 234h1v1h-1zM1290 234h1v1h-1zM1292 234h1v1h-1zM1294 234h1v1h-1zM1296 234h1v1h-1zM1298 234h1v1h-1zM1300 234h1v1h-1zM1302 234h1v1h-1zM1304 234h1v1h-1zM1306 234h1v1h-1zM1308 234h1v1h-1zM1310 234h1v1h-1zM1312 234h1v1h-1zM1314 234h1v1h-1zM1316 234h1v1h-1zM1318 234h1v1h-1zM1320 234h1v1h-1zM1322 234h1v1h-1zM1324 234h1v1h-1zM1326 234h1v1h-1zM1328 234h1v1h-1zM1330 234h1v1h-1zM1332 234h1v1h-1zM1334 234h1v1h-1zM1336 234h1v1h-1zM1338 234h1v1h-1zM1340 234h1v1h-1zM1342 234h1v1h-1zM1344 234h1v1h-1zM1346 234h1v1h-1zM1348 234h1v1h-1zM1350 234h1v1h-1zM1352 234h1v1h-1zM1354 234h1v1h-1zM1356 234h1v1h-1zM1358 234h1v1h-1zM1360 234h1v1h-1zM1362 234h1v1h-1zM1364 234h1v1h-1zM1366 234h1v1h-1zM1368 234h1v1h-1zM1370 234h1v1h-1zM1372 234h1v1h-1zM1374 234h1v1h-1zM1376 234h1v1h-1zM1378 234h1v1h-1zM1380 234h1v1h-1zM1382 234h1v1h-1zM1384 234h1v1h-1zM1386 234h1v1h-1zM1388 234h1v1h-1zM1390 234h1v1h-1zM1392 234h1v1h-1zM1394 234h1v1h-1zM1396 234h1v1h-1zM1398 234h1v1h-1zM1400 234h1v1h-1zM1402 234h1v1h-1zM1404 234h1v1h-1zM1406 234h1v1h-1zM1408 234h1v1h-1zM1410 234h1v1h-1zM1412 234h1v1h-1zM1414 234h1v1h-1zM1416 234h1v1h-1zM1418 234h1v1h-1zM1420 234h1v1h-1zM1422 234h1v1h-1zM1424 234h1v1h-1zM1426 234h1v1h-1zM1428 234h1v1h-1zM1430 234h1v1h-1zM1432 234h1v1h-1zM1434 234h1v1h-1zM1436 234h1v1h-1zM1438 234h1v1h-1zM1440 234h1v1h-1zM1442 234h1v1h-1zM1444 234h1v1h-1zM1446 234h1v1h-1zM1448 234h1v1h-1zM1450 234h1v1h-1zM1452 234h1v1h-1zM1454 234h1v1h-1zM1456 234h1v1h-1zM1458 234h1v1h-1zM1462 235h1v1h-1zM1464 235h1v1h-1zM1466 235h1v1h-1zM1468 235h1v1h-1zM1470 235h1v1h-1zM1472 235h1v1h-1zM1474 235h1v1h-1zM1476 235h1v1h-1zM1478 235h1v1h-1zM1480 235h1v1h-1zM1482 235h1v1h-1zM1484 235h1v1h-1zM1486 235h1v1h-1zM1488 235h1v1h-1zM1490 235h1v1h-1zM1492 235h1v1h-1zM1494 235h1v1h-1zM1496 235h1v1h-1zM1498 235h1v1h-1zM1500 235h1v1h-1zM1502 235h1v1h-1zM1504 235h1v1h-1zM1506 235h1v1h-1zM1508 235h1v1h-1zM1510 235h1v1h-1zM1512 235h1v1h-1zM1514 235h1v1h-1zM1516 235h1v1h-1zM1518 235h1v1h-1zM1520 235h1v1h-1zM1522 235h1v1h-1zM1524 235h1v1h-1zM1526 235h1v1h-1zM1528 235h1v1h-1zM1530 235h1v1h-1zM1532 235h1v1h-1zM1534 235h1v1h-1zM1536 235h1v1h-1zM1538 235h1v1h-1zM1540 235h1v1h-1zM1542 235h1v1h-1zM1544 235h1v1h-1zM1546 235h1v1h-1zM1548 235h1v1h-1zM1550 235h1v1h-1zM1552 235h1v1h-1zM1554 235h1v1h-1zM1556 235h1v1h-1zM1558 235h1v1h-1zM1560 235h1v1h-1zM1562 235h1v1h-1zM1564 235h1v1h-1zM1566 235h1v1h-1zM1568 235h1v1h-1zM1570 235h1v1h-1zM1572 235h1v1h-1zM1574 235h2v1h-2zM1578 236h1v1h-1zM1580 236h1v1h-1zM1582 236h1v1h-1zM1584 236h1v1h-1zM1586 236h1v1h-1zM1588 236h1v1h-1zM1590 236h1v1h-1zM1592 236h1v1h-1zM1594 236h1v1h-1zM1596 236h1v1h-1zM1598 236h1v1h-1zM1600 236h1v1h-1zM1602 236h1v1h-1zM1604 236h1v1h-1zM1606 236h1v1h-1zM1608 236h1v1h-1zM1610 236h1v1h-1zM1612 236h1v1h-1zM1614 236h1v1h-1zM1616 236h1v1h-1zM1618 236h1v1h-1zM1620 236h1v1h-1zM1622 236h1v1h-1zM1624 236h1v1h-1zM1626 236h1v1h-1zM1628 236h1v1h-1zM1630 236h1v1h-1zM1632 236h1v1h-1zM1634 236h1v1h-1zM1636 236h1v1h-1zM1638 236h1v1h-1zM1640 236h1v1h-1zM1642 236h1v1h-1zM1644 236h1v1h-1zM1646 236h1v1h-1zM1648 236h1v1h-1zM1650 236h1v1h-1zM1652 236h2v1h-2zM1656 237h1v1h-1zM1658 237h1v1h-1zM1660 237h1v1h-1zM1662 237h1v1h-1zM1664 237h1v1h-1zM1666 237h1v1h-1zM1668 237h1v1h-1zM1670 237h1v1h-1zM1672 237h1v1h-1zM1674 237h1v1h-1zM1676 237h1v1h-1zM1678 237h1v1h-1zM1680 237h1v1h-1zM1682 237h2v1h-2zM1686 238h1v1h-1zM1688 238h1v1h-1zM1690 238h1v1h-1zM1692 238h1v1h-1zM1694 238h1v1h-1zM1696 238h1v1h-1zM1698 238h1v1h-1zM1700 238h1v1h-1zM1702 238h1v1h-1zM1706 239h1v1h-1zM1708 239h1v1h-1zM1710 239h1v1h-1zM1712 239h1v1h-1zM1714 239h1v1h-1zM1716 239h1v1h-1zM1718 239h1v1h-1zM1722 240h1v1h-1zM1724 240h1v1h-1zM1726 240h1v1h-1zM1728 240h1v1h-1zM1730 240h1v1h-1zM1733 241h1v1h-1zM1736 241h1v1h-1zM1738 241h1v1h-1zM1740 241h1v1h-1zM1742 241h1v1h-1zM1745 241h1v1h-1zM1748 242h1v1h-1zM1750 242h1v1h-1zM1752 242h1v1h-1zM1754 242h1v1h-1zM1757 243h1v1h-1zM1760 243h1v1h-1z" fill="#00ff00" shape-rendering="crispEdges"/><path d="M538 32h3v1h-3zM536 33h3v1h-3zM541 33h9v1h-9zM531 34h5v1h-5zM550 34h11v1h-11zM527 35h4v1h-4zM561 35h8v1h-8zM523 36h5v1h-5zM569 36h8v1h-8zM519 37h5v1h-5zM577 37h3v1h-3zM515 38h4v1h-4zM580 38h3v1h-3zM513 39h2v1h-2zM583 39h4v1h-4zM508 40h5v1h-5zM587 40h2v1h-2zM504 41h5v1h-5zM589 41h2v1h-2zM502 42h3v1h-3zM591 42h2v1h-2zM497 43h6v1h-6zM593 43h2v1h-2zM488 44h9v1h-9zM595 44h2v1h-2zM482 45h7v1h-7zM597 45h2v1h-2zM478 46h4v1h-4zM599 46h2v1h-2zM471 47h8v1h-8zM601 47h1v1h-1zM465 48h6v1h-6zM602 48h2v1h-2zM456 49h9v1h-9zM604 49h1v1h-1zM447 50h10v1h-10zM605 50h1v1h-1zM436 51h11v1h-11zM606 51h1v1h-1zM426 52h11v1h-11zM607 52h2v1h-2zM410 53h17v1h-17zM609 53h1v1h-1zM391 54h20v1h-20zM610 54h1v1h-1zM366 55h25v1h-25zM611 55h1v1h-1zM333 56h34v1h-34zM612 56h1v1h-1zM271 57h62v1h-62zM613 57h2v1h-2zM71 58h200v1h-200zM615 58h1v1h-1zM616 59h1v1h-1zM617 60h2v1h-2zM619 61h2v1h-2zM621 62h2v1h-2zM623 63h2v1h-2zM625 64h3v1h-3zM628 65h4v1h-4zM632 66h3v1h-3zM635 67h2v1h-2zM637 68h1v1h-1zM638 69h1v1h-1zM639 70h2v1h-2zM641 71h1v1h-1zM642 72h2v1h-2zM644 73h2v1h-2zM646 74h2v1h-2zM648 75h1v1h-1zM649 76h2v1h-2zM651 77h1v1h-1zM652 78h1v1h-1zM653 79h2v1h-2zM655 80h2v1h-2zM657 81h3v1h-3zM660 82h3v1h-3zM663 83h3v1h-3zM666 84h3v1h-3zM669 85h3v1h-3zM672 86h2v1h-2zM674 87h2v1h-2zM676 88h2v1h-2zM678 89h2v1h-2zM680 90h2v1h-2zM682 91h2v1h-2zM684 92h2v1h-2zM686 93h2v1h-2zM1758 93h3v1h-3zM688 94h2v1h-2zM1753 94h5v1h-5zM690 95h2v1h-2zM1748 95h5v1h-5zM692 96h2v1h-2zM1743 96h5v1h-5zM694 97h1v1h-1zM1738 97h5v1h-5zM695 98h1v1h-1zM1733 98h5v1h-5zM696 99h3v1h-3zM1728 99h5v1h-5zM699 100h4v1h-4zM1723 100h5v1h-5zM703 101h4v1h-4zM1718 101h5v1h-5zM707 102h3v1h-3zM1713 102h5v1h-5zM710 103h3v1h-3zM1708 103h5v1h-5zM713 104h2v1h-2zM1703 104h5v1h-5zM715 105h2v1h-2zM1698 105h5v1h-5zM717 106h2v1h-2zM1693 106h5v1h-5zM719 107h2v1h-2zM1688 107h5v1h-5zM721 108h2v1h-2zM1683 108h5v1h-5zM723 109h3v1h-3zM1678 109h5v1h-5zM726 110h2v1h-2zM1672 110h6v1h-6zM728 111h2v1h-2zM1667 111h5v1h-5zM730 112h2v1h-2zM1661 112h6v1h-6zM732 113h1v1h-1zM1655 113h6v1h-6zM733 114h2v1h-2zM1650 114h5v1h-5zM735 115h4v1h-4zM1644 115h6v1h-6zM739 116h4v1h-4zM1639 116h5v1h-5zM743 117h2v1h-2zM1633 117h6v1h-6zM745 118h2v1h-2zM1628 118h5v1h-5zM747 119h3v1h-3zM1623 119h5v1h-5zM750 120h3v1h-3zM1618 120h5v1h-5zM753 121h4v1h-4zM1613 121h5v1h-5zM757 122h3v1h-3zM1608 122h5v1h-5zM760 123h2v1h-2zM1603 123h5v1h-5zM762 124h1v1h-1zM1598 124h5v1h-5zM763 125h2v1h-2zM1593 125h5v1h-5zM765 126h1v1h-1zM1588 126h5v1h-5zM766 127h2v1h-2zM1582 127h6v1h-6zM768 128h2v1h-2zM1576 128h6v1h-6zM770 129h2v1h-2zM1570 129h6v1h-6zM772 130h6v1h-6zM1564 130h6v1h-6zM778 131h6v1h-6zM1558 131h6v1h-6zM784 132h3v1h-3zM1553 132h5v1h-5zM787 133h3v1h-3zM1547 133h6v1h-6zM790 134h2v1h-2zM1541 134h6v1h-6zM792 135h3v1h-3zM1535 135h6v1h-6zM795 136h2v1h-2zM1529 136h6v1h-6zM797 137h2v1h-2zM1523 137h6v1h-6zM799 138h2v1h-2zM1518 138h5v1h-5zM801 139h2v1h-2zM1512 139h6v1h-6zM803 140h2v1h-2zM1506 140h6v1h-6zM805 141h2v1h-2zM1500 141h6v1h-6zM807 142h2v1h-2zM1495 142h5v1h-5zM809 143h2v1h-2zM1489 143h6v1h-6zM811 144h2v1h-2zM1483 144h6v1h-6zM813 145h4v1h-4zM1478 145h5v1h-5zM817 146h5v1h-5zM1472 146h6v1h-6zM822 147h3v1h-3zM1466 147h6v1h-6zM825 148h3v1h-3zM1460 148h6v1h-6zM828 149h3v1h-3zM1455 149h5v1h-5zM831 150h3v1h-3zM1449 150h6v1h-6zM834 151h4v1h-4zM1443 151h6v1h-6zM838 152h2v1h-2zM1438 152h5v1h-5zM840 153h2v1h-2zM1432 153h6v1h-6zM842 154h2v1h-2zM1426 154h6v1h-6zM844 155h2v1h-2zM1420 155h6v1h-6zM846 156h2v1h-2zM1415 156h5v1h-5zM848 157h3v1h-3zM1409 157h6v1h-6zM851 158h2v1h-2zM1403 158h6v1h-6zM853 159h2v1h-2zM1398 159h5v1h-5zM855 160h4v1h-4zM1392 160h6v1h-6zM859 161h5v1h-5zM1386 161h6v1h-6zM864 162h4v1h-4zM1380 162h6v1h-6zM868 163h2v1h-2zM1375 163h5v1h-5zM870 164h3v1h-3zM1369 164h6v1h-6zM873 165h3v1h-3zM1363 165h6v1h-6zM876 166h2v1h-2zM1358 166h5v1h-5zM878 167h2v1h-2zM1352 167h6v1h-6zM880 168h3v1h-3zM1346 168h6v1h-6zM883 169h2v1h-2zM1340 169h6v1h-6zM885 170h3v1h-3zM1335 170h5v1h-5zM888 171h2v1h-2zM1329 171h6v1h-6zM890 172h3v1h-3zM1323 172h6v1h-6zM893 173h2v1h-2zM1318 173h5v1h-5zM895 174h3v1h-3zM1312 174h6v1h-6zM898 175h5v1h-5zM1306 175h6v1h-6zM903 176h5v1h-5zM1300 176h6v1h-6zM908 177h3v1h-3zM1295 177h5v1h-5zM911 178h3v1h-3zM1289 178h6v1h-6zM914 179h2v1h-2zM1283 179h6v1h-6zM916 180h2v1h-2zM1278 180h5v1h-5zM918 181h2v1h-2zM1272 181h6v1h-6zM920 182h2v1h-2zM1266 182h6v1h-6zM922 183h2v1h-2zM1260 183h6v1h-6zM924 184h2v1h-2zM1255 184h5v1h-5zM926 185h3v1h-3zM1249 185h6v1h-6zM929 186h3v1h-3zM1243 186h6v1h-6zM932 187h2v1h-2zM1237 187h6v1h-6zM934 188h3v1h-3zM1231 188h6v1h-6zM937 189h3v1h-3zM1225 189h6v1h-6zM940 190h4v1h-4zM1219 190h6v1h-6zM944 191h5v1h-5zM1213 191h6v1h-6zM949 192h5v1h-5zM1207 192h6v1h-6zM954 193h3v1h-3zM1201 193h6v1h-6zM957 194h2v1h-2zM1195 194h6v1h-6zM959 195h2v1h-2zM1189 195h6v1h-6zM961 196h2v1h-2zM1183 196h6v1h-6zM963 197h2v1h-2zM1177 197h6v1h-6zM965 198h2v1h-2zM1171 198h6v1h-6zM967 199h3v1h-3zM1165 199h6v1h-6zM970 200h2v1h-2zM1159 200h6v1h-6zM972 201h6v1h-6zM1152 201h7v1h-7zM978 202h6v1h-6zM1146 202h6v1h-6zM984 203h3v1h-3zM1141 203h5v1h-5zM987 204h4v1h-4zM1136 204h5v1h-5zM991 205h3v1h-3zM1132 205h4v1h-4zM994 206h3v1h-3zM1124 206h8v1h-8zM997 207h3v1h-3zM1115 207h9v1h-9zM1000 208h3v1h-3zM1107 208h8v1h-8zM1003 209h2v1h-2zM1100 209h7v1h-7zM1005 210h4v1h-4zM1093 210h7v1h-7zM1009 211h7v1h-7zM1083 211h10v1h-10zM1016 212h14v1h-14zM1077 212h6v1h-6zM1030 213h10v1h-10zM1064 213h13v1h-13zM1040 214h24v1h-24z" fill="#00ff00" shape-rendering="crispEdges"/><path d="M558.5 31 V332 M1045.5 31 V332" stroke="#fff" stroke-dasharray="3 3" fill="none" shape-rendering="crispEdges" style="mix-blend-mode:difference"/><path d="M73 34.5 H1761 M73 214.5 H1761" stroke="#fff" stroke-dasharray="3 3" fill="none" shape-rendering="crispEdges" style="mix-blend-mode:difference"/><text x="471" y="21" font-family="Liberation Sans" font-weight="bold" font-size="22" fill="#0000ff" textLength="71" lengthAdjust="spacingAndGlyphs">V(n005)</text><rect x="1344.5" y="2.5" width="75" height="25" fill="#000" stroke="#808080" stroke-width="1"/><rect x="1344.5" y="2.5" width="75" height="25" fill="none" stroke="#fff" stroke-width="1" stroke-dasharray="3 1"/><text x="1346.5" y="21" font-family="Liberation Sans" font-weight="bold" font-size="22" fill="#00ff00" textLength="71" lengthAdjust="spacingAndGlyphs">V(n002)</text><rect x="0" y="382" width="1761" height="2" fill="#454545"/><rect x="0" y="384" width="1761" height="1" fill="#dfe8f1"/><rect x="0" y="385" width="1761" height="43" fill="url(#tb)"/><rect x="1" y="428" width="1760" height="2" fill="#6a6a6a"/><rect x="1" y="428" width="1760" height="370" fill="#a0a0a0"/><rect x="2" y="429" width="1759" height="369" fill="#696969"/><rect x="3" y="430" width="1758" height="368" fill="#c0c0c0"/><rect x="1" y="798" width="1760" height="2" fill="#fbfcfd"/><path d="M3 409.5 H11.5 M14 405.5 L19.5 400.5 V398 M14 413.5 L19.5 418 V421" stroke="#000" stroke-width="1.3" fill="none"/><rect x="11.5" y="405" width="2.5" height="9.5" fill="#808080" stroke="#000" stroke-width="1"/><path d="M15.2 414.2 L19.8 416.2 L19.8 418.6 L15.8 418.2 Z" fill="#000"/><text x="31.5" y="417.5" font-family="Liberation Sans" font-size="17" fill="#8c8c8c" textLength="223.5" lengthAdjust="spacingAndGlyphs">Filtro Attivo 2 Ordine - C.asc</text><path d="M770 461h40v1h-40zM845 461h144v1h-144zM770 461h1v115h-1zM704 499h238v1h-238zM941 499h1v49h-1zM941 584h1v163h-1zM941 518h266v1h-266zM1206 518h1v20h-1zM1206 575h1v172h-1zM894 461h1v96h-1zM894 556h29v1h-29zM647 575h11v1h-11zM694 575h11v1h-11zM751 575h40v1h-40zM837 575h86v1h-86zM647 575h1v48h-1zM647 670h1v96h-1zM704 546h1v68h-1zM704 661h1v86h-1zM856 575h1v86h-1zM856 693h1v54h-1zM903 575h1v39h-1zM903 613h200v1h-200zM1102 566h1v48h-1zM1102 566h86v1h-86zM959 566h59v1h-59zM988 461h1v106h-1zM647 746h560v1h-560zM1140 518h1v105h-1zM1140 670h1v77h-1zM1169 547h19v1h-19zM1169 547h1v57h-1zM1169 603h76v1h-76zM1244 556h1v48h-1zM1224 556h31v1h-31z" fill="#0000ff" shape-rendering="crispEdges"/><path d="M810 461h16v1h-16zM830 461h15v1h-15zM825 452h1v20h-1zM830 452h1v20h-1zM658 575h16v1h-16zM678 575h16v1h-16zM673 566h1v19h-1zM678 566h1v19h-1zM856 661h1v17h-1zM856 682h1v11h-1zM846 677h20v1h-20zM846 682h20v1h-20zM924 556h6v1h-6zM924 575h6v1h-6zM927 573h1v5h-1zM943 554h6v1h-6zM946 551h1v6h-1zM943 577h6v1h-6zM941 548h1v9h-1zM941 575h1v10h-1zM1189 547h6v1h-6zM1189 566h6v1h-6zM1192 564h1v5h-1zM1208 545h6v1h-6zM1211 542h1v6h-1zM1208 568h6v1h-6zM1206 538h1v10h-1zM1206 566h1v9h-1zM647 623h1v5h-1zM647 664h1v6h-1zM642 634h11v1h-11zM647 629h1v11h-1zM642 658h11v1h-11zM1140 623h1v5h-1zM1140 664h1v6h-1zM1135 634h11v1h-11zM1140 629h1v11h-1zM1135 658h11v1h-11z" fill="#000080" shape-rendering="crispEdges"/><path d="M922.5 547.5 L959.5 566.5 L922.5 584.5 Z M1187.5 537.5 L1224.5 556.5 L1187.5 575.5 Z M704.5 575.5 L709.2 575.5 L714.0 566.5 L723.5 584.5 L732.9 566.5 L742.4 584.5 L747.2 575.5 L751.9 575.5 M790.5 575.5 L795.2 575.5 L800.0 566.5 L809.5 584.5 L818.9 566.5 L828.4 584.5 L833.2 575.5 L837.9 575.5 M704.5 499.5 L704.5 504.2 L713.5 509.0 L695.0 518.5 L713.5 527.9 L695.0 537.4 L704.5 542.2 L704.5 546.9 M704.5 613.5 L704.5 618.2 L713.5 623.0 L695.0 632.5 L713.5 641.9 L695.0 651.4 L704.5 656.2 L704.5 660.9" stroke="#000080" stroke-width="1" fill="none" shape-rendering="crispEdges"/><path d="M636.5 765.5 H658.5 L647.5 775.5 Z" stroke="#0000ff" stroke-width="1" fill="none" shape-rendering="crispEdges"/><circle cx="647.5" cy="645.5" r="18.3" stroke="#000080" stroke-width="1" fill="none" shape-rendering="crispEdges"/><circle cx="1140.5" cy="645.5" r="18.3" stroke="#000080" stroke-width="1" fill="none" shape-rendering="crispEdges"/><path d="M892 459h5v5h-5zM702 573h5v5h-5zM768 573h5v5h-5zM854 573h5v5h-5zM901 573h5v5h-5zM939 516h5v5h-5zM986 564h5v5h-5zM645 744h5v5h-5zM702 744h5v5h-5zM854 744h5v5h-5zM939 744h5v5h-5zM1138 516h5v5h-5zM1138 744h5v5h-5zM1242 554h5v5h-5z" fill="#0000ff" shape-rendering="crispEdges"/><text x="819" y="449" font-family="Liberation Sans" font-weight="bold" font-size="12" fill="#000000" stroke="#000000" stroke-width="0.25" textLength="15.8" lengthAdjust="spacingAndGlyphs">C2</text><text x="815.3" y="484" font-family="Liberation Sans" font-weight="bold" font-size="12" fill="#000000" stroke="#000000" stroke-width="0.25" textLength="23.3" lengthAdjust="spacingAndGlyphs">47μ</text><text x="716.3" y="517.6" font-family="Liberation Sans" font-weight="bold" font-size="12" fill="#000000" stroke="#000000" stroke-width="0.25" textLength="16.7" lengthAdjust="spacingAndGlyphs">R3</text><text x="716.6" y="539.7" font-family="Liberation Sans" font-weight="bold" font-size="12" fill="#000000" stroke="#000000" stroke-width="0.25" textLength="31.3" lengthAdjust="spacingAndGlyphs">1500</text><text x="668" y="562.7" font-family="Liberation Sans" font-weight="bold" font-size="12" fill="#000000" stroke="#000000" stroke-width="0.25" textLength="16" lengthAdjust="spacingAndGlyphs">C3</text><text x="656.6" y="596.7" font-family="Liberation Sans" font-weight="bold" font-size="12" fill="#000000" stroke="#000000" stroke-width="0.25" textLength="39.1" lengthAdjust="spacingAndGlyphs">1000μ</text><text x="719.3" y="562.7" font-family="Liberation Sans" font-weight="bold" font-size="12" fill="#000000" stroke="#000000" stroke-width="0.25" textLength="15.9" lengthAdjust="spacingAndGlyphs">R1</text><text x="720.3" y="596.7" font-family="Liberation Sans" font-weight="bold" font-size="12" fill="#000000" stroke="#000000" stroke-width="0.25" textLength="14.9" lengthAdjust="spacingAndGlyphs">51</text><text x="804.1" y="562.7" font-family="Liberation Sans" font-weight="bold" font-size="12" fill="#000000" stroke="#000000" stroke-width="0.25" textLength="17" lengthAdjust="spacingAndGlyphs">R2</text><text x="797.2" y="597" font-family="Liberation Sans" font-weight="bold" font-size="12" fill="#000000" stroke="#000000" stroke-width="0.25" textLength="31.3" lengthAdjust="spacingAndGlyphs">3220</text><text x="950.3" y="552" font-family="Liberation Sans" font-weight="bold" font-size="12" fill="#000000" stroke="#000000" stroke-width="0.25" textLength="15.3" lengthAdjust="spacingAndGlyphs">U1</text><text x="950" y="588.7" font-family="Liberation Sans" font-weight="bold" font-size="12" fill="#000000" stroke="#000000" stroke-width="0.25" textLength="45.8" lengthAdjust="spacingAndGlyphs">LT1013</text><text x="661" y="626.7" font-family="Liberation Sans" font-weight="bold" font-size="12" fill="#000000" stroke="#000000" stroke-width="0.25" textLength="16.5" lengthAdjust="spacingAndGlyphs">V1</text><text x="716.4" y="631.7" font-family="Liberation Sans" font-weight="bold" font-size="12" fill="#000000" stroke="#000000" stroke-width="0.25" textLength="16.7" lengthAdjust="spacingAndGlyphs">R4</text><text x="716.4" y="652.9" font-family="Liberation Sans" font-weight="bold" font-size="12" fill="#000000" stroke="#000000" stroke-width="0.25" textLength="14.2" lengthAdjust="spacingAndGlyphs">2k</text><text x="661" y="674.6" font-family="Liberation Sans" font-weight="bold" font-size="12" fill="#000000" stroke="#000000" stroke-width="0.25" textLength="107.7" lengthAdjust="spacingAndGlyphs">SINE(2.5 2 3000)</text><text x="661" y="690.8" font-family="Liberation Sans" font-weight="bold" font-size="12" fill="#000000" stroke="#000000" stroke-width="0.25" textLength="29.3" lengthAdjust="spacingAndGlyphs">AC 1</text><text x="860.1" y="670.1" font-family="Liberation Sans" font-weight="bold" font-size="12" fill="#000000" stroke="#000000" stroke-width="0.25" textLength="15.2" lengthAdjust="spacingAndGlyphs">C1</text><text x="860" y="697.8" font-family="Liberation Sans" font-weight="bold" font-size="12" fill="#000000" stroke="#000000" stroke-width="0.25" textLength="19.5" lengthAdjust="spacingAndGlyphs">.1μ</text><text x="846.7" y="774.1" font-family="Liberation Sans" font-weight="bold" font-size="12" fill="#000000" stroke="#000000" stroke-width="0.25" textLength="136.8" lengthAdjust="spacingAndGlyphs">.ac dec 10 10 300000</text><text x="1216.3" y="542.3" font-family="Liberation Sans" font-weight="bold" font-size="12" fill="#000000" stroke="#000000" stroke-width="0.25" textLength="16" lengthAdjust="spacingAndGlyphs">U2</text><text x="1216.3" y="580.1" font-family="Liberation Sans" font-weight="bold" font-size="12" fill="#000000" stroke="#000000" stroke-width="0.25" textLength="45.3" lengthAdjust="spacingAndGlyphs">LT1018</text><text x="1154" y="626.9" font-family="Liberation Sans" font-weight="bold" font-size="12" fill="#000000" stroke="#000000" stroke-width="0.25" textLength="16.8" lengthAdjust="spacingAndGlyphs">V2</text><text x="1154" y="674.9" font-family="Liberation Sans" font-weight="bold" font-size="12" fill="#000000" stroke="#000000" stroke-width="0.25" textLength="15.6" lengthAdjust="spacingAndGlyphs">15</text><text x="628.6" y="789" font-family="Liberation Sans" font-weight="bold" font-size="12" fill="#0000c0" stroke="#0000c0" stroke-width="0.25" textLength="54.7" lengthAdjust="spacingAndGlyphs">.tran .01</text><defs><linearGradient id="shl" x1="0" y1="0" x2="1" y2="0"><stop offset="0" stop-color="#000" stop-opacity="0"/><stop offset="1" stop-color="#000" stop-opacity="0.13"/></linearGradient></defs><rect x="1293" y="345" width="18" height="455" fill="url(#shl)"/><defs><linearGradient id="shb" x1="0" y1="0" x2="1" y2="0"><stop offset="0" stop-color="#000" stop-opacity="0"/><stop offset="0.15" stop-color="#000" stop-opacity="0.08"/><stop offset="1" stop-color="#000" stop-opacity="0.1"/></linearGradient></defs><rect x="1300" y="801" width="461" height="3" fill="url(#shb)"/><rect x="1311" y="337" width="443" height="464" fill="#1883d7"/><rect x="1312" y="338" width="441" height="44" fill="#ffffff"/><rect x="1312" y="382" width="441" height="418" fill="#f0f0f0"/><rect x="1323" y="347" width="2" height="24" fill="#7c7c7c"/><path d="M1324.5 347.5 L1329 350.5 M1324.5 370 L1341.5 358.5" stroke="#000" stroke-width="1.3" fill="none"/><path d="M1332.6 347 L1336.9 347 Q1333.2 351 1332.6 356.4 L1336.4 356.4 L1335.8 358.8 L1326 358.8 Z" fill="#800000"/><path d="M1335.6 347 L1346.6 347 L1345.2 349.6 L1343.1 349.6 L1339.6 358.8 L1336.6 358.8 L1339.2 349.6 L1337 349.6 Z" fill="#800000"/><text x="1353" y="367" font-family="Liberation Sans" font-size="17" fill="#000" textLength="223" lengthAdjust="spacingAndGlyphs">Filtro Attivo 2 Ordine - C.asc</text><path d="M1721.5 352.5 L1735.5 366.5 M1735.5 352.5 L1721.5 366.5" stroke="#000" stroke-width="1.1" fill="none"/><rect x="1313" y="392" width="6" height="1" fill="#dcdcdc"/><rect x="1383" y="392" width="369" height="1" fill="#dcdcdc"/><text x="1321" y="397.8" font-family="Liberation Sans" font-size="16.3" fill="#000" textLength="58.6" lengthAdjust="spacingAndGlyphs">Cursor 1</text><text x="1479.3" y="416.4" font-family="Liberation Sans" font-size="16.3" fill="#000" textLength="56.3" lengthAdjust="spacingAndGlyphs">V(n002)</text><text x="1318.4" y="447.6" font-family="Liberation Sans" font-size="16.3" fill="#000" textLength="35.6" lengthAdjust="spacingAndGlyphs">Freq:</text><rect x="1359.5" y="427.5" width="136" height="29" fill="#fff" stroke="#0078d7" stroke-width="1"/><rect x="1379" y="430.5" width="1" height="19" fill="#000"/><text x="1380.5" y="446" font-family="Liberation Sans" font-size="16.3" fill="#000" textLength="94.5" lengthAdjust="spacingAndGlyphs">176.91483Hz</text><text x="1518" y="448.4" font-family="Liberation Sans" font-size="16.3" fill="#000" textLength="35" lengthAdjust="spacingAndGlyphs">Mag:</text><rect x="1562" y="427" width="162" height="30" fill="#fff"/><path d="M1562.5 457 V427.5 H1723" stroke="#a0a0a0" stroke-width="1" fill="none"/><text x="1595.5" y="448.4" font-family="Liberation Sans" font-size="16.3" fill="#000" textLength="94.5" lengthAdjust="spacingAndGlyphs">7.1162055dB</text><text x="1504.5" y="480.4" font-family="Liberation Sans" font-size="16.3" fill="#000" textLength="48.5" lengthAdjust="spacingAndGlyphs">Phase:</text><rect x="1562" y="460" width="162" height="29.5" fill="#fff"/><path d="M1562.5 489.5 V460.5 H1723" stroke="#a0a0a0" stroke-width="1" fill="none"/><text x="1597.8" y="481.2" font-family="Liberation Sans" font-size="16.3" fill="#000" textLength="89.5" lengthAdjust="spacingAndGlyphs">-82.893557°</text><text x="1460.2" y="514" font-family="Liberation Sans" font-size="16.3" fill="#000" textLength="92.8" lengthAdjust="spacingAndGlyphs">Group Delay:</text><rect x="1562.5" y="492.5" width="161" height="29" fill="#fff" stroke="#7a7a7a" stroke-width="1"/><text x="1594.3" y="510.3" font-family="Liberation Sans" font-size="16.3" fill="#000" textLength="96.4" lengthAdjust="spacingAndGlyphs">4.0328745ms</text><circle cx="1740" cy="443.1" r="8.3" fill="#fff" stroke="#333" stroke-width="1.1"/><circle cx="1740" cy="443.1" r="4.3" fill="#333"/><circle cx="1740" cy="476" r="8.3" fill="#fff" stroke="#333" stroke-width="1.1"/><circle cx="1740" cy="508" r="8.3" fill="#fff" stroke="#cccccc" stroke-width="1"/><rect x="1313" y="525" width="439" height="1" fill="#dcdcdc"/><rect x="1313" y="537" width="6" height="1" fill="#dcdcdc"/><rect x="1383" y="537" width="369" height="1" fill="#dcdcdc"/><text x="1321.3" y="543" font-family="Liberation Sans" font-size="16.3" fill="#000" textLength="58.7" lengthAdjust="spacingAndGlyphs">Cursor 2</text><text x="1481" y="561.5" font-family="Liberation Sans" font-size="16.3" fill="#000" textLength="56" lengthAdjust="spacingAndGlyphs">V(n002)</text><text x="1321" y="593.6" font-family="Liberation Sans" font-size="16.3" fill="#000" textLength="35.6" lengthAdjust="spacingAndGlyphs">Freq:</text><rect x="1362.5" y="572.5" width="136" height="29" fill="#fff" stroke="#7a7a7a" stroke-width="1"/><text x="1377" y="590.6" font-family="Liberation Sans" font-size="16.3" fill="#000" textLength="105.7" lengthAdjust="spacingAndGlyphs">3.1115127KHz</text><text x="1521" y="592.7" font-family="Liberation Sans" font-size="16.3" fill="#000" textLength="34" lengthAdjust="spacingAndGlyphs">Mag:</text><rect x="1564" y="572" width="162" height="29.5" fill="#fff"/><path d="M1564.5 601.5 V572.5 H1725" stroke="#a0a0a0" stroke-width="1" fill="none"/><text x="1594.2" y="593.6" font-family="Liberation Sans" font-size="16.3" fill="#000" textLength="100.8" lengthAdjust="spacingAndGlyphs">-46.130129dB</text><text x="1507.4" y="625.7" font-family="Liberation Sans" font-size="16.3" fill="#000" textLength="47.6" lengthAdjust="spacingAndGlyphs">Phase:</text><rect x="1564" y="605" width="162" height="29.5" fill="#fff"/><path d="M1564.5 634.5 V605.5 H1725" stroke="#a0a0a0" stroke-width="1" fill="none"/><text x="1599.4" y="626.4" font-family="Liberation Sans" font-size="16.3" fill="#000" textLength="90.3" lengthAdjust="spacingAndGlyphs">-234.18136°</text><text x="1463" y="658.7" font-family="Liberation Sans" font-size="16.3" fill="#000" textLength="92" lengthAdjust="spacingAndGlyphs">Group Delay:</text><rect x="1564.5" y="637.5" width="161" height="29" fill="#fff" stroke="#7a7a7a" stroke-width="1"/><text x="1603.1" y="654.8" font-family="Liberation Sans" font-size="16.3" fill="#000" textLength="82.4" lengthAdjust="spacingAndGlyphs">81.03735μs</text><circle cx="1740" cy="586" r="8.3" fill="#fff" stroke="#333" stroke-width="1.1"/><circle cx="1740" cy="586" r="4.3" fill="#333"/><circle cx="1740" cy="618" r="8.3" fill="#fff" stroke="#333" stroke-width="1.1"/><circle cx="1740" cy="650.6" r="8.3" fill="#fff" stroke="#cccccc" stroke-width="1"/><rect x="1313" y="670" width="439" height="1" fill="#dcdcdc"/><rect x="1313" y="798" width="439" height="1" fill="#e0e0e0"/><rect x="1313" y="685" width="129" height="1" fill="#dcdcdc"/><rect x="1623" y="685" width="129" height="1" fill="#dcdcdc"/><text x="1445.4" y="691.3" font-family="Liberation Sans" font-size="16.3" fill="#000" textLength="174.9" lengthAdjust="spacingAndGlyphs">Ratio (Cursor2 / Cursor1)</text><text x="1321.4" y="720.7" font-family="Liberation Sans" font-size="16.3" fill="#000" textLength="35.6" lengthAdjust="spacingAndGlyphs">Freq:</text><rect x="1362.5" y="700.5" width="136" height="29" fill="#fff" stroke="#7a7a7a" stroke-width="1"/><text x="1376.7" y="718.6" font-family="Liberation Sans" font-size="16.3" fill="#000" textLength="106.3" lengthAdjust="spacingAndGlyphs">2.9345978KHz</text><text x="1521" y="721.2" font-family="Liberation Sans" font-size="16.3" fill="#000" textLength="34" lengthAdjust="spacingAndGlyphs">Mag:</text><rect x="1564.5" y="700.5" width="161" height="29" fill="#fff" stroke="#7a7a7a" stroke-width="1"/><text x="1594.4" y="718.9" font-family="Liberation Sans" font-size="16.3" fill="#000" textLength="100.2" lengthAdjust="spacingAndGlyphs">-53.246335dB</text><text x="1507.4" y="752.4" font-family="Liberation Sans" font-size="16.3" fill="#000" textLength="47.6" lengthAdjust="spacingAndGlyphs">Phase:</text><rect x="1564.5" y="733.5" width="161" height="28" fill="#fff" stroke="#7a7a7a" stroke-width="1"/><text x="1602.1" y="750.6" font-family="Liberation Sans" font-size="16.3" fill="#000" textLength="85.6" lengthAdjust="spacingAndGlyphs">-151.28781°</text><text x="1463" y="786.1" font-family="Liberation Sans" font-size="16.3" fill="#000" textLength="92" lengthAdjust="spacingAndGlyphs">Group Delay:</text><rect x="1564.5" y="765.5" width="161" height="29" fill="#fff" stroke="#7a7a7a" stroke-width="1"/><text x="1594.4" y="783.4" font-family="Liberation Sans" font-size="16.3" fill="#000" textLength="101.1" lengthAdjust="spacingAndGlyphs">-3.9518372ms</text><rect x="1754" y="384" width="7" height="44" fill="#b6c5d4"/><rect x="1754" y="396" width="7" height="1" fill="#5a6a88"/><rect x="1754" y="424" width="7" height="1" fill="#5a6a88"/><rect x="1754" y="425" width="7" height="3" fill="#cfdbe8"/><rect x="1755.5" y="409.5" width="8" height="5" rx="1" fill="#e4e4e4" stroke="#3a4258" stroke-width="1"/><rect x="1754" y="430" width="7" height="368" fill="#a8a8a8"/></svg>
</body></html>
